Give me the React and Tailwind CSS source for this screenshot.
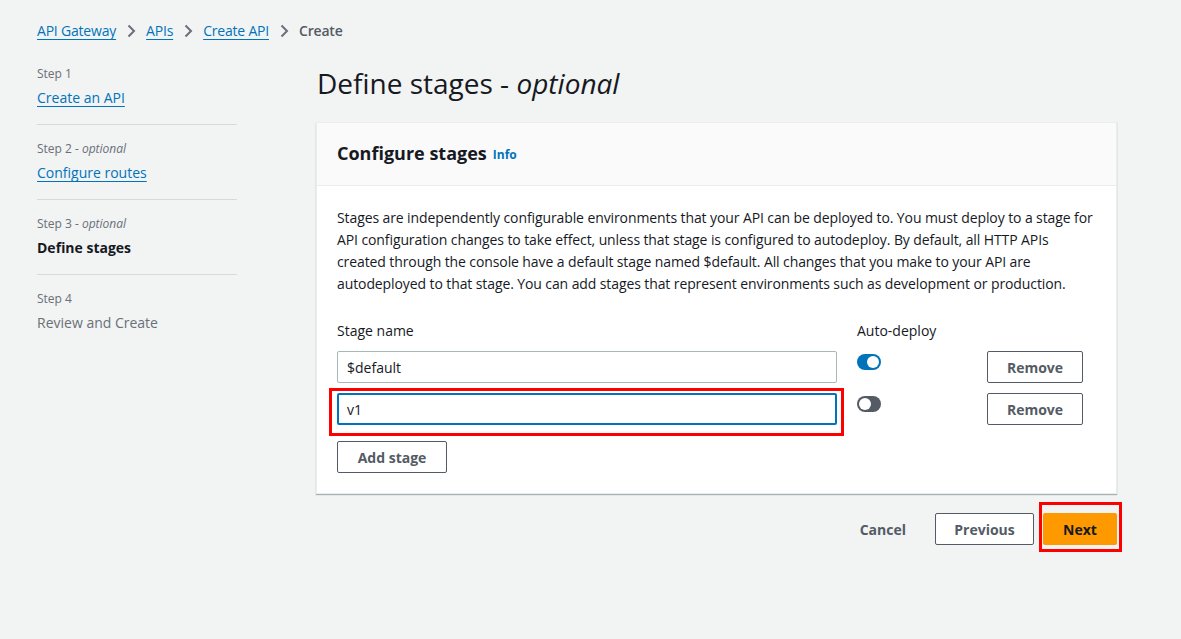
import React from 'react';

const FONT = { fontFamily: '"Open Sans", "Noto Sans", Arial, sans-serif' };

const STEPS = [
  { label: 'Step 1', optional: false, title: 'Create an API', state: 'link' },
  { label: 'Step 2', optional: true, title: 'Configure routes', state: 'link' },
  { label: 'Step 3', optional: true, title: 'Define stages', state: 'active' },
  { label: 'Step 4', optional: false, title: 'Review and Create', state: 'disabled' },
];

function Chevron() {
  return (
    <svg width="16" height="16" viewBox="0 0 16 16" className="mx-[7px]">
      <path d="M5.5 2.5 11 8l-5.5 5.5" fill="none" stroke="#687078" strokeWidth="2" />
    </svg>
  );
}

function Breadcrumbs() {
  const links = ['API Gateway', 'APIs', 'Create API'];
  return (
    <nav className="flex items-center h-[20px] text-[14px] leading-[20px] tracking-[-0.2px]">
      {links.map((l) => (
        <React.Fragment key={l}>
          <a className="text-[#0073bb] underline underline-offset-[3px] decoration-1">{l}</a>
          <Chevron />
        </React.Fragment>
      ))}
      <span className="text-[#545b64] font-semibold">Create</span>
    </nav>
  );
}

function StepNav() {
  return (
    <ul className="w-[200px]">
      {STEPS.map((s, i) => (
        <li
          key={s.label}
          className={i === 0 ? 'pb-[16px] border-b border-[#d5dbdb]' : i === STEPS.length - 1 ? 'pt-[16px]' : 'py-[16px] border-b border-[#d5dbdb]'}
        >
          <div className="text-[12px] leading-[16px] text-[#687078]">
            {s.label}
            {s.optional && <span className="italic"> - optional</span>}
          </div>
          <div className="mt-[6px] text-[14px] leading-[20px]">
            {s.state === 'link' && (
              <a className="text-[#0073bb] underline underline-offset-[3px] decoration-1">{s.title}</a>
            )}
            {s.state === 'active' && <span className="font-bold text-[#16191f]">{s.title}</span>}
            {s.state === 'disabled' && <span className="text-[#687078]">{s.title}</span>}
          </div>
        </li>
      ))}
    </ul>
  );
}

function Toggle({ on }) {
  return (
    <div
      className={
        'mt-[3px] w-[24px] h-[16px] rounded-full flex items-center px-[2px] ' +
        (on ? 'bg-[#0073bb] justify-end' : 'bg-[#545b64] justify-start')
      }
    >
      <div className="w-[12px] h-[12px] rounded-full bg-white" />
    </div>
  );
}

function SecondaryButton({ children, className = '' }) {
  return (
    <button
      type="button"
      className={
        'h-[32px] rounded-[2px] border border-[#545b64] bg-white text-[14px] font-bold text-[#545b64] ' +
        className
      }
    >
      {children}
    </button>
  );
}

function StageRow({ value, on, focused }) {
  return (
    <div className="flex items-start">
      <div className="relative w-[500px]">
        <div
          className={
            'h-[32px] w-full rounded-[2px] bg-white flex items-center text-[14px] text-[#16191f] ' +
            (focused ? 'border-2 border-[#0073bb] pl-[8px]' : 'border border-[#aab7b8] pl-[9px]')
          }
        >
          {value}
        </div>
        {focused && (
          <div className="absolute left-[-8px] right-[-7px] top-[-5px] bottom-[-11px] border-[3px] border-[#ff0000]" />
        )}
      </div>
      <div className="w-[150px] pl-[20px]">
        <Toggle on={on} />
      </div>
      <SecondaryButton className="w-[96px]">Remove</SecondaryButton>
    </div>
  );
}

export default function App() {
  return (
    <div style={FONT} className="min-h-[639px] bg-[#f2f3f3] text-[#16191f] pl-[37px] pt-[21px]">
      <Breadcrumbs />
      <div className="flex mt-[22px]">
        <div className="w-[279px] pt-[3px]">
          <StepNav />
        </div>
        <main className="w-[801px]">
          <h1 className="text-[28px] leading-[36px] font-normal text-[#16191f] ml-[1px] pt-[2px]">
            Define stages - <span className="italic">optional</span>
          </h1>
          <section className="mt-[21px] bg-white border border-[#eaeded] shadow-[0_1px_1px_0_rgba(0,28,36,0.3)]">
            <header className="h-[63px] bg-[#fafafa] border-b border-[#eaeded] flex items-start pt-[18px] px-[20px]">
              <h2 className="text-[18px] leading-[24px] font-bold">Configure stages</h2>
              <a className="ml-[6px] mt-[4px] text-[12px] leading-[20px] font-bold text-[#0073bb]">Info</a>
            </header>
            <div className="px-[20px] pt-[21px] pb-[20px]">
              <p className="text-[14px] leading-[22px] text-[#16191f] tracking-[-0.1px]">
                Stages are independently configurable environments that your API can be deployed to. You must deploy to a stage for
                <br />
                API configuration changes to take effect, unless that stage is configured to autodeploy. By default, all HTTP APIs
                <br />
                created through the console have a default stage named $default. All changes that you make to your API are
                <br />
                autodeployed to that stage. You can add stages that represent environments such as development or production.
              </p>
              <div className="flex mt-[26px] text-[14px] leading-[20px]">
                <div className="w-[520px]">Stage name</div>
                <div>Auto-deploy</div>
              </div>
              <div className="mt-[10px] flex flex-col gap-[10px]">
                <StageRow value="$default" on />
                <StageRow value="v1" on={false} focused />
              </div>
              <SecondaryButton className="mt-[16px] w-[110px]">Add stage</SecondaryButton>
            </div>
          </section>
          <div className="flex items-center justify-end mt-[19px]">
            <button type="button" className="text-[14px] font-bold text-[#545b64] mr-[29px]">Cancel</button>
            <SecondaryButton className="w-[99px] mr-[9px]">Previous</SecondaryButton>
            <div className="relative">
              <button
                type="button"
                className="h-[32px] w-[74px] rounded-[2px] bg-[#ff9900] text-[14px] font-bold text-[#16191f]"
              >
                Next
              </button>
              <div className="absolute left-[-4px] right-[-5px] top-[-11px] bottom-[-7px] border-[3px] border-[#ff0000]" />
            </div>
          </div>
        </main>
      </div>
    </div>
  );
}
